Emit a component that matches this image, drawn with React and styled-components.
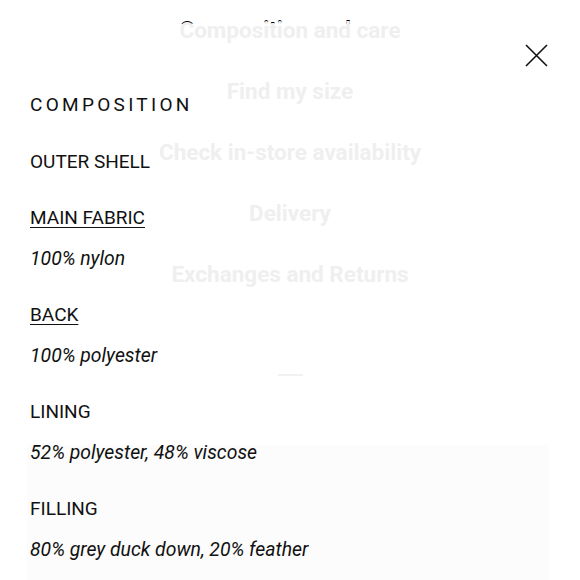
import React from 'react'
import styled, { createGlobalStyle } from 'styled-components'

const GlobalStyle = createGlobalStyle`
  * { box-sizing: border-box; }
  body {
    margin: 0;
    background: #fff;
    font-family: Roboto, "Liberation Sans", sans-serif;
    color: #111;
  }
`

const Page = styled.div`
  position: relative;
  width: 580px;
  height: 580px;
  overflow: hidden;
  background: #fff;
`

const Header = styled.div`
  height: 23.5px;
  padding-top: 17px;
  overflow: hidden;
  text-align: center;
`

const Title = styled.h1`
  margin: 0;
  font-size: 22.5px;
  line-height: 24px;
  font-weight: 700;
  color: #000;
`

const Shade = styled.div`
  position: absolute;
  left: 27px;
  width: 522px;
  top: 445px;
  bottom: 0;
  background: #fcfcfc;
  z-index: 0;
`

const Panel = styled.section`
  position: relative;
  z-index: 1;
  padding: 20.5px 32px 0 30px;
`

const TopBar = styled.div`
  display: flex;
  justify-content: flex-end;
  height: 23px;
`

const CloseButton = styled.button`
  width: 23px;
  height: 23px;
  padding: 0;
  border: none;
  background: none;
  cursor: pointer;
  svg { display: block; }
`

const Heading = styled.h2`
  margin: 26.3px 0 32.5px;
  font-size: 19px;
  line-height: 24px;
  font-weight: 400;
  letter-spacing: 3.3px;
  color: #111;
`

const Group = styled.div`
  margin-bottom: 32.5px;
`

const Label = styled.div`
  font-size: 19px;
  line-height: 24px;
  color: #111;
  text-decoration: ${p => (p.$underline ? 'underline' : 'none')};
  text-underline-offset: 3px;
  text-decoration-thickness: 1px;
  margin-bottom: ${p => (p.$flush ? '0' : '16.5px')};
`

const Value = styled.div`
  font-size: 19.4px;
  line-height: 24px;
  font-style: italic;
  color: #111;
`

const MenuLayer = styled.nav`
  position: absolute;
  inset: 0;
  z-index: 2;
  pointer-events: none;
  display: flex;
  flex-direction: column;
  align-items: center;
`

const MenuItem = styled.div`
  font-size: 22.5px;
  line-height: 61px;
  font-weight: 700;
  color: #efefef;
`

const Handle = styled.div`
  width: 25px;
  height: 2px;
  margin-top: 69px;
  background: #f2f2f2;
`

const menu = [
  'Composition and care',
  'Find my size',
  'Check in-store availability',
  'Delivery',
  'Exchanges and Returns',
]

const parts = [
  { label: 'OUTER SHELL', flush: true },
  { label: 'MAIN FABRIC', underline: true, value: '100% nylon' },
  { label: 'BACK', underline: true, value: '100% polyester' },
  { label: 'LINING', value: '52% polyester, 48% viscose' },
  { label: 'FILLING', value: '80% grey duck down, 20% feather' },
]

const App = () => {
  return (
    <>
      <GlobalStyle />
      <Page>
        <Header>
          <Title>Composition and care</Title>
        </Header>
        <Shade />
        <Panel>
          <TopBar>
            <CloseButton aria-label="Close">
              <svg width="23" height="23" viewBox="0 0 23 23">
                <path d="M1 1L22 22M22 1L1 22" stroke="#111" strokeWidth="1.6" fill="none" />
              </svg>
            </CloseButton>
          </TopBar>
          <Heading>COMPOSITION</Heading>
          {parts.map(p => (
            <Group key={p.label}>
              <Label $underline={p.underline} $flush={p.flush}>{p.label}</Label>
              {p.value && <Value>{p.value}</Value>}
            </Group>
          ))}
        </Panel>
        <MenuLayer>
          {menu.map(m => (
            <MenuItem key={m}>{m}</MenuItem>
          ))}
          <Handle />
        </MenuLayer>
      </Page>
    </>
  )
}

export default App
